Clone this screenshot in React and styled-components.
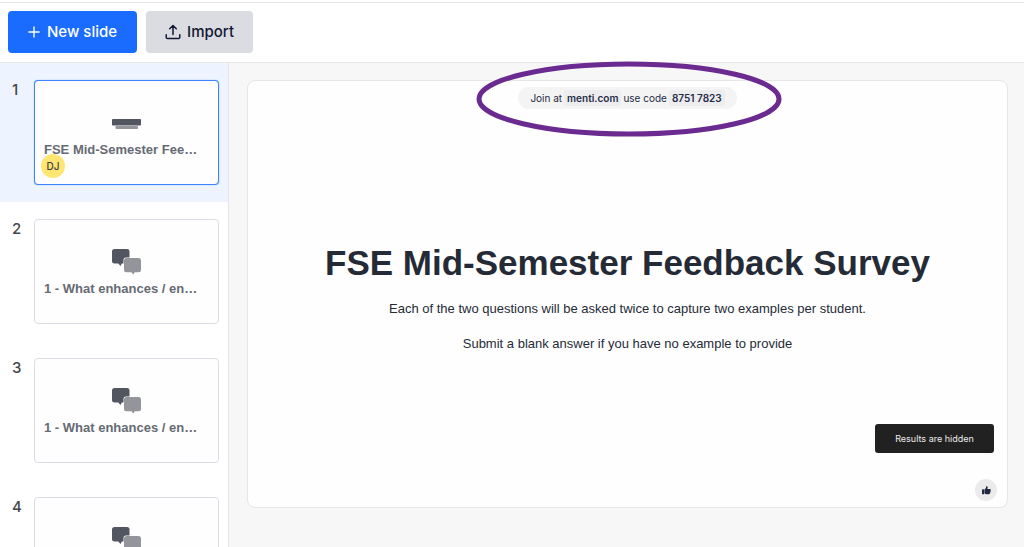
import React from "react";
import styled, { createGlobalStyle } from "styled-components";

const GlobalStyle = createGlobalStyle`
    * {
        box-sizing: border-box;
    }
    body {
        margin: 0;
        background: #fff;
        color: #252b36;
        font-family: "Liberation Sans", Arial, sans-serif;
    }
    button {
        border: 0;
        cursor: pointer;
    }
    h1, p, ol {
        margin: 0;
        padding: 0;
    }
`;

const uiFont = `Inter, "Open Sans", sans-serif`;

const Page = styled.div`
    display: flex;
    flex-direction: column;
    height: 100vh;
    overflow: hidden;
`;

const Toolbar = styled.header`
    display: flex;
    flex: none;
    gap: 9px;
    margin-top: 2px;
    padding: 8px 8px 9px;
    border-top: 1px solid #e6e6e8;
    border-bottom: 1px solid #e6e6e8;
`;

const ToolButton = styled.button`
    display: flex;
    align-items: center;
    justify-content: center;
    gap: ${(props) => props.$gap};
    height: 42px;
    padding: 0 ${(props) => props.$pad};
    border-radius: 4px;
    background: ${(props) => (props.$primary ? "#196cff" : "#dbdce1")};
    color: ${(props) => (props.$primary ? "#fff" : "#101834")};
    font: 500 15px/24px ${uiFont};
`;

const Main = styled.div`
    display: flex;
    flex: 1;
    min-height: 0;
`;

const SlideList = styled.ol`
    flex: none;
    width: 229px;
    overflow: hidden;
    border-right: 1px solid #e6e6e8;
    list-style: none;
`;

const SlideItem = styled.li`
    display: flex;
    height: 139px;
    padding: 17px 9px 17px 0;
    background: ${(props) => (props.$active ? "#edf4ff" : "#fff")};
`;

const SlideNumber = styled.span`
    flex: none;
    width: 34px;
    padding-left: 12px;
    color: #45474d;
    font: 500 15px/20px ${uiFont};
`;

const Thumbnail = styled.button`
    position: relative;
    display: flex;
    flex: 1;
    flex-direction: column;
    align-items: center;
    min-width: 0;
    padding: 29px 9px 0;
    border: 1px solid ${(props) => (props.$active ? "#3d83ff" : "#dcdde4")};
    border-radius: 4px;
    background: #fefefe;
    box-shadow: ${(props) => (props.$active ? "0 0 1px #3d83ff" : "none")};
`;

const ThumbnailTitle = styled.span`
    width: 100%;
    color: #666a73;
    font: bold 13px/26px "Liberation Sans", Arial, sans-serif;
    text-align: left;
    white-space: nowrap;
`;

const Avatar = styled.span`
    position: absolute;
    bottom: 6px;
    left: 6px;
    width: 24px;
    height: 24px;
    border-radius: 50%;
    background: #ffe672;
    color: #3f3f45;
    font: 500 10px/24px ${uiFont};
    text-align: center;
`;

const Workspace = styled.main`
    flex: 1;
    min-width: 0;
    padding: 17px 16px 17px 18px;
    background: #f7f7f7;
`;

const Slide = styled.section`
    position: relative;
    display: flex;
    flex-direction: column;
    align-items: center;
    justify-content: center;
    aspect-ratio: 16 / 9;
    padding-top: 4px;
    border: 1px solid #e6e6e7;
    border-radius: 8px;
    background: #fefefe;
    text-align: center;
`;

const JoinBar = styled.div`
    position: absolute;
    top: 6px;
    display: flex;
    align-items: center;
    gap: 2px;
    height: 22px;
    padding: 0 12px;
    border-radius: 11px;
    background: #f4f4f5;
    color: #252b47;
    font: 400 10px/16px ${uiFont};
    white-space: nowrap;
`;

const JoinChip = styled.strong`
    padding: 0 3px;
    border-radius: 3px;
    background: #ededf0;
    font-weight: 600;
`;

const Highlight = styled.svg`
    position: absolute;
    top: -20px;
    width: 308px;
    height: 78px;
    pointer-events: none;
`;

const SlideTitle = styled.h1`
    font-size: 35px;
    line-height: 44px;
`;

const SlideText = styled.p`
    margin-top: ${(props) => props.$gap};
    font-size: 13px;
    line-height: 16px;
`;

const HiddenNotice = styled.div`
    position: absolute;
    right: 13px;
    bottom: 54px;
    width: 119px;
    border-radius: 3px;
    background: #212121;
    color: #ececec;
    font: 400 9px/29px ${uiFont};
`;

const LikeButton = styled.button`
    position: absolute;
    right: 10px;
    bottom: 6px;
    display: grid;
    place-items: center;
    width: 22px;
    height: 22px;
    padding: 0;
    border-radius: 50%;
    background: #ebebeb;
`;

const PlusIcon = () => (
    <svg width="12" height="12" viewBox="0 0 12 12" stroke="currentColor" strokeWidth="1.4">
        <path d="M6 .4v11.2M.4 6h11.2" />
    </svg>
);

const UploadIcon = () => (
    <svg width="16" height="16" viewBox="0 0 16 16" fill="none" stroke="currentColor" strokeWidth="1.5" strokeLinecap="round" strokeLinejoin="round">
        <path d="M8 10.500V1.500M4.700 4.800 8 1.500l3.300 3.300M1.200 10.800v2.500c0 .8.500 1.300 1.300 1.300h11c.8 0 1.300-.5 1.300-1.300v-2.500" />
    </svg>
);

const HeadingIcon = () => (
    <svg width="29" height="27" viewBox="0 0 29 27">
        <rect y="9" width="29" height="6.500" rx=".8" fill="#525660" />
        <rect x="3.500" y="16" width="22.500" height="3" rx=".8" fill="#94959b" />
    </svg>
);

const ChatIcon = () => (
    <svg width="29" height="27" viewBox="0 0 29 27">
        <path d="M2.500 0h12.500a2.500 2.500 0 0 1 2.500 2.500v9.500a2.500 2.500 0 0 1-2.500 2.500H9.800L8.500 17l-2.200-2.500H2.500a2.500 2.500 0 0 1-2.500-2.500V2.500a2.500 2.500 0 0 1 2.500-2.500Z" fill="#525660" />
        <path d="M14 8.500h13a2.500 2.500 0 0 1 2.500 2.500v10.200a2.500 2.500 0 0 1-2.500 2.500h-4.500l-1 2.300-2.200-2.300H14a2.500 2.500 0 0 1-2.500-2.500V11A2.500 2.500 0 0 1 14 8.500Z" fill="#fefefe" />
        <path d="M14.500 9h12a2.500 2.500 0 0 1 2.500 2.500v9.200a2.500 2.500 0 0 1-2.500 2.500h-3.800l-1.200 2.300-2.200-2.300h-4.800a2.500 2.500 0 0 1-2.500-2.500v-9.200a2.500 2.500 0 0 1 2.500-2.500Z" fill="#94959b" />
    </svg>
);

const ThumbIcon = () => (
    <svg width="9" height="9" viewBox="0 0 9 9" fill="#202940">
        <rect y="3.200" width="2" height="5" rx=".5" />
        <path d="M2.400 3.600 4 2V.8c0-.9 1.600-.9 1.700.4 0 .7-.2 1.300-.4 1.700h2.500c.9 0 1.200.7.800 1.300.2.400.2.800-.1 1.200.1.500 0 .8-.4 1.100 0 1-.5 1.700-1.300 1.700H4.600c-.9 0-1.500-.3-2.200-.7Z" />
    </svg>
);

const slides = [
    { title: "FSE Mid-Semester Fee…", icon: HeadingIcon, editor: "DJ" },
    { title: "1 - What enhances / en…", icon: ChatIcon },
    { title: "1 - What enhances / en…", icon: ChatIcon },
    { icon: ChatIcon },
];

const App = () => {
    return (
        <>
            <GlobalStyle />
            <Page>
                <Toolbar>
                    <ToolButton type="button" $primary $gap="7px" $pad="20px">
                        <PlusIcon />
                        New slide
                    </ToolButton>
                    <ToolButton type="button" $gap="6px" $pad="19px">
                        <UploadIcon />
                        Import
                    </ToolButton>
                </Toolbar>

                <Main>
                    <SlideList>
                        {slides.map((slide, index) => (
                            <SlideItem key={index} $active={index === 0}>
                                <SlideNumber>{index + 1}</SlideNumber>
                                <Thumbnail
                                    type="button"
                                    aria-label={`Slide ${index + 1}`}
                                    $active={index === 0}
                                >
                                    <slide.icon />
                                    {slide.title && <ThumbnailTitle>{slide.title}</ThumbnailTitle>}
                                    {slide.editor && <Avatar>{slide.editor}</Avatar>}
                                </Thumbnail>
                            </SlideItem>
                        ))}
                    </SlideList>

                    <Workspace>
                        <Slide>
                            <JoinBar>
                                Join at <JoinChip>menti.com</JoinChip> use code <JoinChip>8751 7823</JoinChip>
                            </JoinBar>
                            <Highlight viewBox="0 0 308 78" aria-hidden="true">
                                <ellipse cx="155" cy="38" rx="150" ry="35" fill="none" stroke="#6b2a90" strokeWidth="5" />
                            </Highlight>
                            <SlideTitle>FSE Mid-Semester Feedback Survey</SlideTitle>
                            <SlideText $gap="16px">
                                Each of the two questions will be asked twice to capture two examples per student.
                            </SlideText>
                            <SlideText $gap="19px">Submit a blank answer if you have no example to provide</SlideText>
                            <HiddenNotice>Results are hidden</HiddenNotice>
                            <LikeButton type="button" aria-label="Like">
                                <ThumbIcon />
                            </LikeButton>
                        </Slide>
                    </Workspace>
                </Main>
            </Page>
        </>
    );
};

export default App;
